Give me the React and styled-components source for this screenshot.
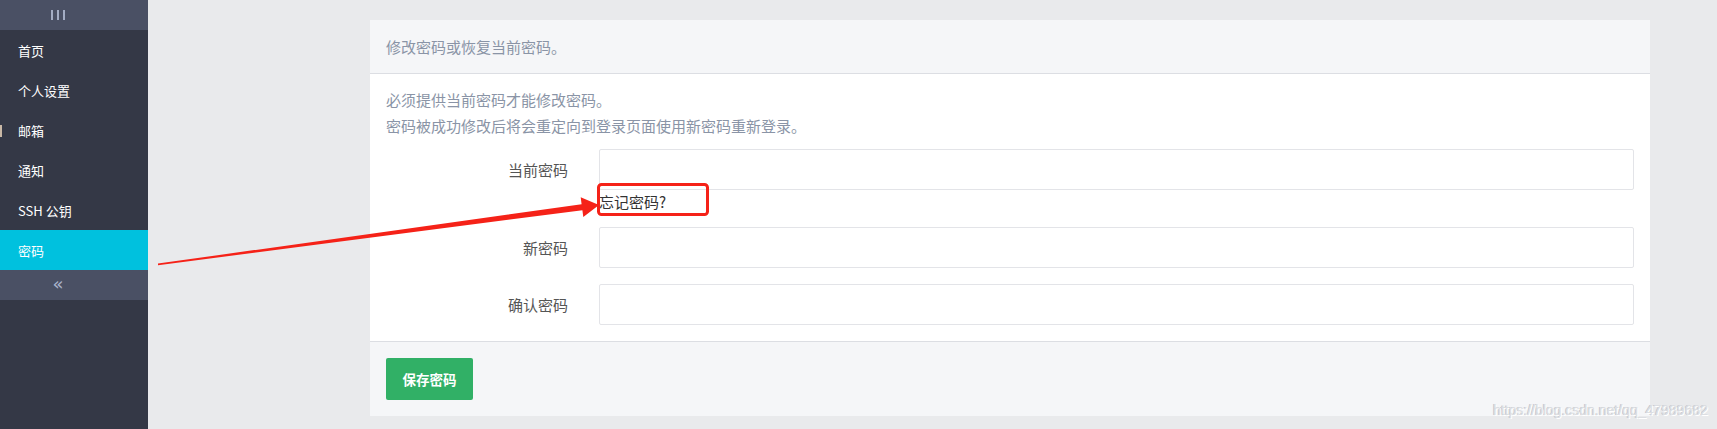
import React from "react";
import styled, { createGlobalStyle } from "styled-components";

const GlobalStyle = createGlobalStyle`
  html, body {
    margin: 0;
    padding: 0;
    background: #e9eaec;
  }
  body {
    font-family: "Noto Sans CJK SC", "Noto Sans", "Liberation Sans", sans-serif;
  }
`;

// theme
// ------ #343846 sidebar dark
// ------ #4a5064 sidebar bars
// ------ #00c1de active item
// ------ #31b066 save button

const Page = styled.div`
  position: relative;
  display: flex;
  width: 1717px;
  height: 429px;
  overflow: hidden;
`;

const Sidebar = styled.nav`
  width: 148px;
  flex-shrink: 0;
  background: #343846;
  display: flex;
  flex-direction: column;
`;

const SideBar = styled.div`
  height: 30px;
  background: #4a5064;
  display: flex;
  align-items: center;
  justify-content: center;
  color: #a4adc4;
`;

const Bars = styled.div`
  display: flex;
  gap: 4px;
  margin-left: -32px;

  span {
    width: 2px;
    height: 10px;
    background: #a4adc4;
  }
`;

const Chevrons = styled.span`
  font-family: "DejaVu Sans", sans-serif;
  font-size: 18px;
  margin-left: -32px;
  margin-top: -3px;
  color: #aab4cc;
`;

const SideItem = styled.div`
  position: relative;
  height: 40px;
  display: flex;
  align-items: center;
  padding-left: 18px;
  font-size: 13px;
  color: #ffffff;
  background: ${(p) => (p.active ? "#00c1de" : "transparent")};

  &::before {
    content: "";
    display: ${(p) => (p.marked ? "block" : "none")};
    position: absolute;
    left: 0;
    top: 15px;
    width: 2px;
    height: 12px;
    background: #c9b8a6;
  }
`;

const Main = styled.main`
  flex: 1;
  padding: 20px 0 0 222px;
`;

const Panel = styled.section`
  width: 1280px;
  background: #ffffff;
`;

const PanelHead = styled.div`
  height: 53px;
  display: flex;
  align-items: center;
  padding: 0 16px;
  background: #f5f6f8;
  border-bottom: 1px solid #dcdee3;
  font-size: 15px;
  color: #8a94a6;
`;

const PanelBody = styled.div`
  padding: 13px 16px 16px;
`;

const Note = styled.p`
  margin: 0;
  font-size: 15px;
  line-height: 26px;
  color: #8a94a6;
`;

const Form = styled.div`
  margin-top: 10px;
  display: flex;
  flex-direction: column;
`;

const Row = styled.div`
  display: grid;
  grid-template-columns: 182px 1fr;
  column-gap: 31px;
  align-items: center;
  margin-top: ${(p) => p.gap || 0}px;
`;

const Label = styled.label`
  text-align: right;
  font-size: 15px;
  color: #555555;
`;

const Field = styled.div`
  height: 41px;
  box-sizing: border-box;
  border: 1px solid #e3e4e8;
  border-radius: 2px;
  background: #fff;
`;

const Forgot = styled.a`
  grid-column: 2;
  margin-top: 2px;
  font-size: 15px;
  line-height: 20px;
  color: #333333;
  text-decoration: none;
`;

const PanelFoot = styled.div`
  padding: 16px;
  background: #f5f6f8;
  border-top: 1px solid #dcdee3;
`;

const SaveButton = styled.button`
  width: 87px;
  height: 42px;
  border: none;
  border-radius: 2px;
  background: #31b066;
  color: #ffffff;
  font-family: inherit;
  font-size: 13.5px;
  font-weight: 700;
`;

const Watermark = styled.div`
  position: absolute;
  right: 9px;
  bottom: 11px;
  font-family: "Liberation Sans", sans-serif;
  font-size: 14px;
  color: #dcdee2;
  text-shadow: 1px 1px 0 #ffffff, -1px 0 0 #c4c7cc;
`;

const Annotation = styled.svg`
  position: absolute;
  left: 0;
  top: 0;
  pointer-events: none;
`;

const menu = ["首页", "个人设置", "邮箱", "通知", "SSH 公钥", "密码"];

export default function App() {
  return (
    <>
      <GlobalStyle />
      <Page>
        <Sidebar>
          <SideBar>
            <Bars>
              <span />
              <span />
              <span />
            </Bars>
          </SideBar>
          {menu.map((m) => (
            <SideItem key={m} active={m === "密码"} marked={m === "邮箱"}>
              {m}
            </SideItem>
          ))}
          <SideBar>
            <Chevrons>«</Chevrons>
          </SideBar>
        </Sidebar>

        <Main>
          <Panel>
            <PanelHead>修改密码或恢复当前密码。</PanelHead>
            <PanelBody>
              <Note>必须提供当前密码才能修改密码。</Note>
              <Note>密码被成功修改后将会重定向到登录页面使用新密码重新登录。</Note>
              <Form>
                <Row>
                  <Label>当前密码</Label>
                  <Field />
                  <Forgot href="#">忘记密码?</Forgot>
                </Row>
                <Row gap={15}>
                  <Label>新密码</Label>
                  <Field />
                </Row>
                <Row gap={16}>
                  <Label>确认密码</Label>
                  <Field />
                </Row>
              </Form>
            </PanelBody>
            <PanelFoot>
              <SaveButton>保存密码</SaveButton>
            </PanelFoot>
          </Panel>
        </Main>

        <Annotation width="1717" height="429" viewBox="0 0 1717 429">
          <rect x="598.5" y="184.5" width="109" height="30" rx="3" fill="none" stroke="#f52218" strokeWidth="3" />
          <polygon
            points="158,263.6 581.6,204.2 580.7,197.3 599,205 583.3,217.1 582.4,210.2 158,265.2"
            fill="#f52218"
          />
        </Annotation>

        <Watermark>https://blog.csdn.net/qq_47989682</Watermark>
      </Page>
    </>
  );
}
